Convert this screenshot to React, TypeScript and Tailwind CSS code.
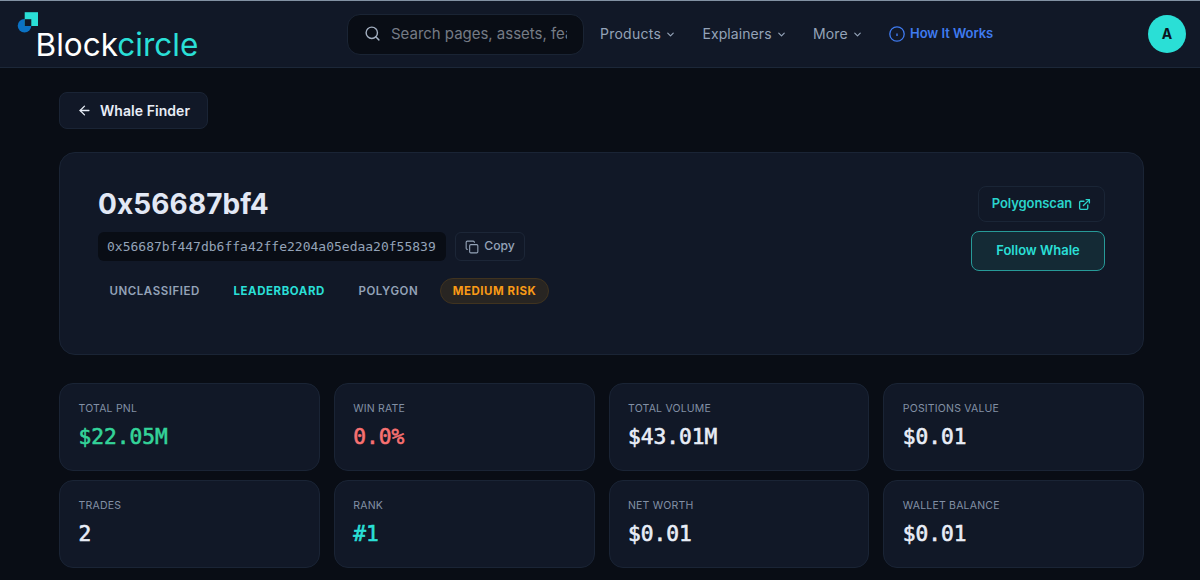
import React from 'react';
import { ArrowLeft, ChevronDown, Copy, ExternalLink, Search } from 'lucide-react';
import clsx from 'clsx';

const NAV_ITEMS = [
  { name: 'Products', className: 'w-[102.5px] tracking-[0.25px]' },
  { name: 'Explainers', className: 'w-[110.5px] tracking-[0.08px]' },
  { name: 'More', className: 'w-[76px] tracking-[0.1px]' }
];

const STATS = [
  { label: 'Total PNL', value: '$22.05M', color: 'text-[#34d399]' },
  { label: 'Win Rate', value: '0.0%', color: 'text-[#f87171]' },
  { label: 'Total Volume', value: '$43.01M', color: 'text-[#e8edf7]' },
  { label: 'Positions Value', value: '$0.01', color: 'text-[#e8edf7]' },
  { label: 'Trades', value: '2', color: 'text-[#e8edf7]' },
  { label: 'Rank', value: '#1', color: 'text-[#2adfd6]' },
  { label: 'Net Worth', value: '$0.01', color: 'text-[#e8edf7]' },
  { label: 'Wallet Balance', value: '$0.01', color: 'text-[#e8edf7]' }
];

function Logo() {
  return (
    <div className="relative w-[200px] h-full shrink-0">
      <svg className="absolute left-[17px] top-[10px]" width="22" height="23" viewBox="0 0 22 23">
        <circle cx="7.5" cy="14.7" r="6.8" fill="#0b72c4" />
        <path d="M7.7 1.2H21V15H7.7Z" fill="#2adfd6" />
        <path d="M7.7 8.2H14.3V15H7.7Z" fill="#111827" />
      </svg>
      <div className="pl-[35.5px] pt-[25px] text-[31.5px] leading-[38px] tracking-[0.02px] text-white whitespace-nowrap">
        Block<span className="text-[#2adfd6]">circle</span>
      </div>
    </div>
  );
}

function Header() {
  return (
    <header className="h-[68px] flex items-center bg-[#111827] border-t border-t-[#8291a3] border-b border-b-[#1c2738] pr-[14px]">
      <Logo />
      <div className="ml-[147px] w-[236.5px] h-[41px] shrink-0 flex items-center rounded-[13px] border border-[#1a2434] bg-[#090d15] pl-4 pr-4">
        <Search className="-mt-px w-[17px] h-[17px] shrink-0 text-[#a3afc0]" strokeWidth={2} />
        <input
          type="text"
          placeholder="Search pages, assets, features..."
          className="ml-[10px] min-w-0 flex-1 bg-transparent text-[15px] tracking-[-0.02px] outline-none placeholder:text-[#757b85]"
        />
      </div>
      <nav className="ml-[16.5px] flex items-center text-[14px] text-[#94a3b8]">
        {NAV_ITEMS.map((item) => (
          <a key={item.name} className={clsx('-mt-px flex items-center gap-[4px] whitespace-nowrap', item.className)}>
            {item.name}
            <ChevronDown className="mt-[2px] w-[11px] h-[11px]" strokeWidth={2.6} />
          </a>
        ))}
        <a className="flex items-center gap-[5px] whitespace-nowrap text-[13px] font-semibold tracking-[-0.04px] text-[#3f7bf0]">
          <svg width="16" height="16" viewBox="0 0 16 16" fill="none" stroke="currentColor">
            <circle cx="8" cy="8" r="7.2" strokeWidth="1.3" />
            <path d="M8 7.6V10" strokeWidth="1.4" />
          </svg>
          How It Works
        </a>
      </nav>
      <div className="ml-auto w-[38px] h-[38px] shrink-0 rounded-full bg-[#2adfd6] flex items-center justify-center text-sm font-bold text-[#0b1420]">
        A
      </div>
    </header>
  );
}

function WhaleCard() {
  return (
    <section className="mt-[23px] h-[203px] flex justify-between rounded-[16px] border border-[#1a2435] bg-[#111827] pl-[38px] pr-[38px] pt-[33px]">
      <div>
        <h1 className="pt-px text-[28px] leading-[34px] font-bold tracking-[0.1px] text-[#e2e8f5]">0x56687bf4</h1>
        <div className="mt-[11px] flex items-center gap-[9px]">
          <code className="h-[29px] w-[348px] pl-[9px] flex items-center rounded-md bg-[#090d15] font-['DejaVu_Sans_Mono',monospace] text-[13px] text-[#94a3b8]">
            0x56687bf447db6ffa42ffe2204a05edaa20f55839
          </code>
          <button className="h-[29px] w-[70px] flex items-center justify-center gap-[5px] rounded-md border border-[#1c2637] text-[12.2px] font-medium text-[#94a3b8]">
            <Copy className="w-[14px] h-[14px]" strokeWidth={1.9} />
            Copy
          </button>
        </div>
        <div className="mt-[17px] h-[26px] flex items-center text-[11.5px] leading-[17px] font-semibold tracking-[0.55px] text-[#94a3b8] uppercase">
          <span className="w-[124px] pl-[11.5px] pt-px">Unclassified</span>
          <span className="w-[125px] pl-[11.5px] pt-px text-[#2adfd6] font-bold">Leaderboard</span>
          <span className="w-[93px] pl-[11.5px] pt-px">Polygon</span>
          <span className="h-[26px] w-[109px] pt-px flex items-center justify-center rounded-full border border-[#40331f] bg-[#282522] font-bold text-[#f99a16]">
            Medium Risk
          </span>
        </div>
      </div>
      <div className="flex flex-col items-end gap-[9px]">
        <a className="h-[36px] w-[127px] flex items-center justify-center gap-[6px] rounded-lg border border-[#1a2536] text-[13px] font-semibold tracking-[-0.1px] text-[#2ad4cc]">
          Polygonscan
          <ExternalLink className="w-[13px] h-[13px]" strokeWidth={2.5} />
        </a>
        <button className="h-[40px] w-[134px] rounded-lg border border-[#279a98] bg-[#142a35] text-[13px] font-semibold text-[#2adfd6]">
          Follow Whale
        </button>
      </div>
    </section>
  );
}

export default function App() {
  return (
    <div className="w-[1200px] h-[580px] overflow-hidden bg-[#090d15] font-['Inter','Liberation_Sans',sans-serif]">
      <Header />
      <main className="pl-[59px] pr-[56px] pt-[24px]">
        <button className="h-[37px] w-[149px] flex items-center pl-[17px] gap-[8px] rounded-lg border border-[#1a2435] bg-[#111827] text-[14px] font-semibold tracking-[0.05px] whitespace-nowrap text-[#e8edf7]">
          <ArrowLeft className="w-[15px] h-[15px]" strokeWidth={2.1} />
          Whale Finder
        </button>
        <WhaleCard />
        <div className="mt-[28px] grid grid-cols-4 gap-x-[14px] gap-y-[9px]">
          {STATS.map((stat) => (
            <div key={stat.label} className="h-[88px] rounded-[14px] border border-[#1a2435] bg-[#111827] pl-[18.5px] pt-[17px]">
              <div className="text-[10.5px] leading-4 tracking-[0.2px] uppercase text-[#8290a5]">{stat.label}</div>
              <div className={clsx("mt-[6px] text-[21.2px] leading-[28px] font-['DejaVu_Sans_Mono',monospace] [-webkit-text-stroke:0.6px_currentColor]", stat.color)}>
                {stat.value}
              </div>
            </div>
          ))}
        </div>
      </main>
    </div>
  );
}
